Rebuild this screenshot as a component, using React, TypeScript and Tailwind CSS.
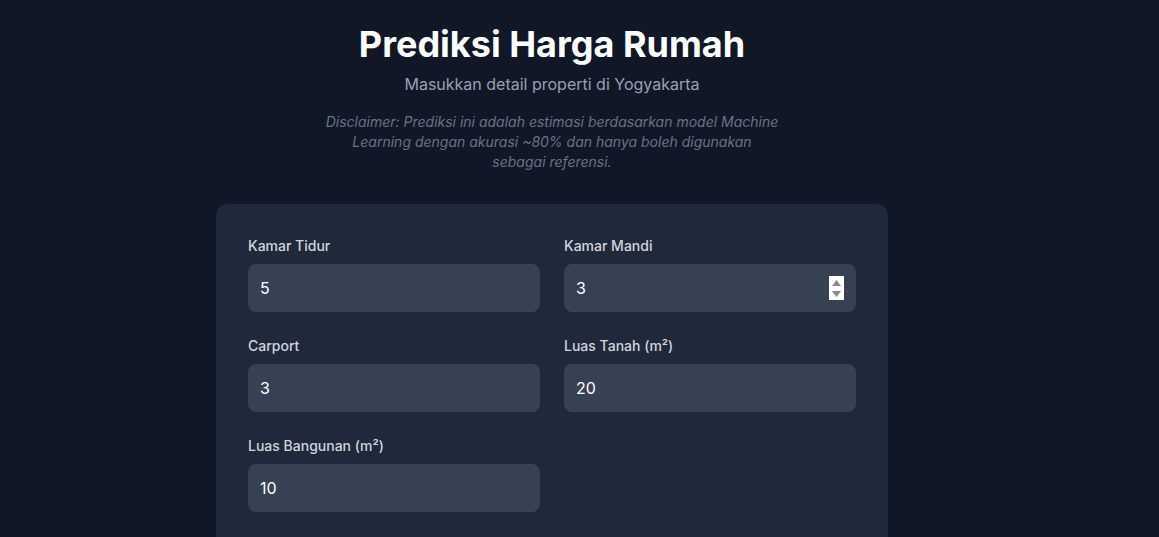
import React from "react";

function Field({ label, value, spinner }: { label: string; value: string; spinner?: boolean }) {
  return (
    <div className="flex flex-col">
      <label className="mb-2 text-sm font-medium leading-5 text-gray-300">{label}</label>
      <div className="relative">
        <input
          type="text"
          defaultValue={value}
          className="h-12 w-full rounded-lg bg-gray-700 px-3 text-base text-white outline-none"
        />
        {spinner && (
          <div className="absolute right-[12px] top-[12px] flex h-6 w-[15px] flex-col items-center justify-center gap-[5px] bg-white">
            <svg width="9" height="6" viewBox="0 0 9 6"><polygon points="4.5,0 9,6 0,6" fill="#8a8a8a" /></svg>
            <svg width="9" height="6" viewBox="0 0 9 6"><polygon points="0,0 9,0 4.5,6" fill="#8a8a8a" /></svg>
          </div>
        )}
      </div>
    </div>
  );
}

export default function App() {
  return (
    <div className="min-h-screen bg-gray-900 pt-6" style={{ fontFamily: "Inter, 'Noto Sans', sans-serif" }}>
      <div className="w-[1104px] px-4">
        <div className="mx-auto flex max-w-2xl flex-col items-center">
          <h1 className="mb-2 text-4xl font-bold leading-10 text-white">Prediksi Harga Rumah</h1>
          <p className="text-base leading-6 text-gray-400">Masukkan detail properti di Yogyakarta</p>
          <p className="mt-4 max-w-[456px] text-center text-sm italic leading-5 text-gray-500">
            Disclaimer: Prediksi ini adalah estimasi berdasarkan model Machine Learning dengan akurasi ~80% dan hanya boleh digunakan sebagai referensi.
          </p>
          <div className="mt-8 w-full rounded-xl bg-gray-800 p-8 shadow-xl">
            <div className="grid grid-cols-2 gap-6">
              <Field label="Kamar Tidur" value="5" />
              <Field label="Kamar Mandi" value="3" spinner />
              <Field label="Carport" value="3" />
              <Field label="Luas Tanah (m²)" value="20" />
              <Field label="Luas Bangunan (m²)" value="10" />
            </div>
            <div className="h-16" />
          </div>
        </div>
      </div>
    </div>
  );
}
